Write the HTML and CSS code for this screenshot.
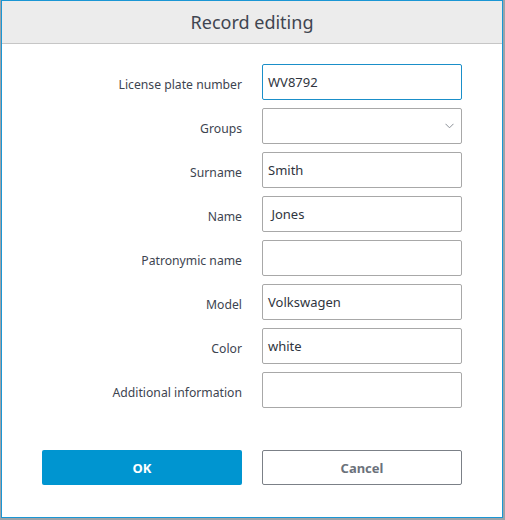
FILE: index.html
```html
<!DOCTYPE html>
<html>
<head>
<meta charset="utf-8">
<link rel="stylesheet" href="styles.css">
</head>
<body>
<div class="dialog">
  <div class="header">Record editing</div>
  <div class="form">
    <label class="lbl">License plate number</label>
    <div class="field focused">WV8792</div>
    <label class="lbl">Groups</label>
    <div class="field select">
      <svg class="chev" width="9" height="6" viewBox="0 0 9 6"><path d="M0.5 0.8 L4.5 4.8 L8.5 0.8" fill="none" stroke="#8a8f96" stroke-width="1"/></svg>
    </div>
    <label class="lbl">Surname</label>
    <div class="field">Smith</div>
    <label class="lbl">Name</label>
    <div class="field">&nbsp;Jones</div>
    <label class="lbl">Patronymic name</label>
    <div class="field"></div>
    <label class="lbl">Model</label>
    <div class="field">Volkswagen</div>
    <label class="lbl">Color</label>
    <div class="field">white</div>
    <label class="lbl">Additional information</label>
    <div class="field"></div>
  </div>
  <div class="buttons">
    <button class="btn ok">OK</button>
    <button class="btn cancel">Cancel</button>
  </div>
</div>
</body>
</html>
```
FILE: styles.css
```css
html, body {
  margin: 0;
  padding: 0;
  background: #9ea3a8;
  width: 505px;
  height: 520px;
  overflow: hidden;
}
.dialog {
  margin-left: 1px;
  width: 500px;
  height: 516px;
  border: 1px solid #1a96d4;
  background: #ffffff;
  font-family: "Noto Sans", "Open Sans", sans-serif;
  color: #3d4450;
  display: flex;
  flex-direction: column;
}
.header {
  height: 42px;
  background: #ececec;
  border-bottom: 1px solid #c6c6c6;
  display: flex;
  align-items: center;
  justify-content: center;
  font-size: 18px;
  color: #3f4551;
}
.form {
  display: grid;
  grid-template-columns: 1fr 200px;
  column-gap: 20px;
  row-gap: 8px;
  padding: 20px 40px 0 40px;
}
.lbl {
  font-size: 12.2px;
  color: #3d4450;
  text-align: right;
  align-self: center;
  line-height: 16px;
  padding-top: 5px;
}
.field {
  height: 34px;
  border: 1px solid #a8a8a8;
  border-radius: 2px;
  font-size: 13px;
  color: #2f3540;
  padding: 0 5px;
  display: flex;
  align-items: center;
  white-space: pre;
}
.field.focused {
  border-color: #1a8fc9;
}
.field.select {
  justify-content: flex-end;
  padding-right: 7px;
}
.chev {
  display: block;
}
.buttons {
  display: grid;
  grid-template-columns: 200px 200px;
  column-gap: 20px;
  padding: 42px 40px 0 40px;
}
.btn {
  height: 35px;
  border-radius: 2px;
  font-family: "Noto Sans", "Open Sans", sans-serif;
  font-size: 13px;
  font-weight: bold;
  padding: 0;
  margin: 0;
}
.btn.ok {
  background: #0095d0;
  border: none;
  color: #ffffff;
}
.btn.cancel {
  background: #ffffff;
  border: 1px solid #7b8087;
  color: #6b717b;
}
```
